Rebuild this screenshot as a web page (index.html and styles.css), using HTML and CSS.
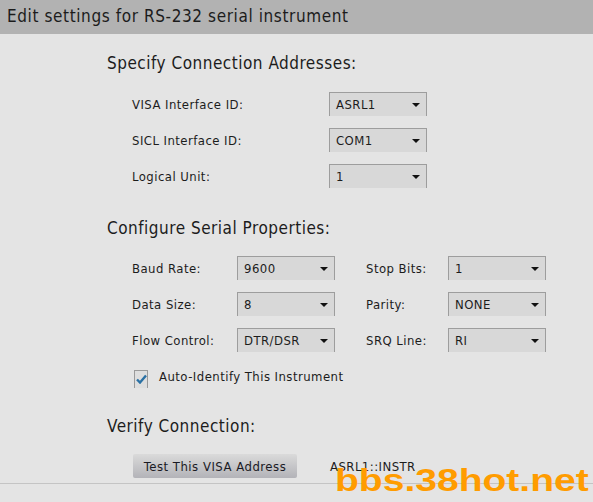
FILE: index.html
```html
<!DOCTYPE html>
<html lang="en">
<head>
  <meta charset="UTF-8">
  <title>Edit settings for RS-232 serial instrument</title>
  <link rel="stylesheet" href="styles.css">
</head>
<body>
  <div class="head">Edit settings for RS-232 serial instrument</div>

  <div class="content">
    <h2 class="section">Specify Connection Addresses:</h2>
    <div class="addr-grid">
      <label>VISA Interface ID:</label>
      <div class="select"><span>ASRL1</span><svg width="8" height="4" viewBox="0 0 8 4"><path d="M0 0h8L4 4z"/></svg></div>
      <label>SICL Interface ID:</label>
      <div class="select"><span>COM1</span><svg width="8" height="4" viewBox="0 0 8 4"><path d="M0 0h8L4 4z"/></svg></div>
      <label>Logical Unit:</label>
      <div class="select"><span>1</span><svg width="8" height="4" viewBox="0 0 8 4"><path d="M0 0h8L4 4z"/></svg></div>
    </div>

    <h2 class="section serial">Configure Serial Properties:</h2>
    <div class="serial-grid">
      <label>Baud Rate:</label>
      <div class="select"><span>9600</span><svg width="8" height="4" viewBox="0 0 8 4"><path d="M0 0h8L4 4z"/></svg></div>
      <label class="col2">Stop Bits:</label>
      <div class="select"><span>1</span><svg width="8" height="4" viewBox="0 0 8 4"><path d="M0 0h8L4 4z"/></svg></div>

      <label>Data Size:</label>
      <div class="select"><span>8</span><svg width="8" height="4" viewBox="0 0 8 4"><path d="M0 0h8L4 4z"/></svg></div>
      <label class="col2">Parity:</label>
      <div class="select"><span>NONE</span><svg width="8" height="4" viewBox="0 0 8 4"><path d="M0 0h8L4 4z"/></svg></div>

      <label>Flow Control:</label>
      <div class="select"><span>DTR/DSR</span><svg width="8" height="4" viewBox="0 0 8 4"><path d="M0 0h8L4 4z"/></svg></div>
      <label class="col2">SRQ Line:</label>
      <div class="select"><span>RI</span><svg width="8" height="4" viewBox="0 0 8 4"><path d="M0 0h8L4 4z"/></svg></div>
    </div>

    <div class="check-row">
      <span class="checkbox">
        <svg width="11" height="10" viewBox="0 0 11 10"><path d="M1 5.5l3 3L10 1.5" fill="none" stroke="#2b71a4" stroke-width="2.4"/></svg>
      </span>
      <span>Auto-Identify This Instrument</span>
    </div>

    <h2 class="section verify">Verify Connection:</h2>
    <div class="verify-row">
      <button class="test-btn">Test This VISA Address</button>
      <span class="address">ASRL1::INSTR</span>
    </div>
  </div>
  <div class="rule"></div>

  <div class="watermark">bbs.38hot.net</div>
</body>
</html>
```

FILE: styles.css
```css
body {
  margin: 0;
  background-color: #e4e4e4;
  font-family: "DejaVu Sans Condensed", "DejaVu Sans", sans-serif;
  color: #1c1c1c;
  position: relative;
  height: 502px;
  overflow: hidden;
}
.head {
  height: 34px;
  line-height: 32px;
  background-color: #b2b2b2;
  font-size: 17px;
  letter-spacing: 0.6px;
  padding-left: 7px;
}
.content {
  padding-left: 107px;
}
.section {
  font-size: 17px;
  font-weight: normal;
  letter-spacing: 0.5px;
  line-height: 20px;
  margin: 19px 0 19px 0;
}
.section.serial {
  margin: 30px 0 18px 0;
}
.section.verify {
  margin: 28px 0 18px 0;
}
label {
  font-size: 13px;
  letter-spacing: 0.45px;
}
.addr-grid {
  display: grid;
  grid-template-columns: 197px 98px;
  row-gap: 12px;
  align-items: center;
  padding-left: 25px;
}
.serial-grid {
  display: grid;
  grid-template-columns: 105px 98px 113px 98px;
  row-gap: 12px;
  align-items: center;
  padding-left: 25px;
}
.col2 {
  margin-left: 31px;
}
.select {
  box-sizing: border-box;
  height: 24px;
  display: flex;
  align-items: center;
  justify-content: space-between;
  padding: 0 6px 0 6px;
  background-color: #d8d8d8;
  border: 1px solid #9d9d9d;
  border-bottom: none;
  font-size: 13px;
  letter-spacing: 0.45px;
}
.select svg {
  fill: #111;
}
.check-row {
  display: flex;
  align-items: center;
  height: 24px;
  margin-top: 12px;
  padding-left: 27px;
  font-size: 13px;
  letter-spacing: 0.45px;
}
.checkbox {
  box-sizing: border-box;
  width: 14px;
  height: 18px;
  margin-top: 6px;
  margin-right: 11px;
  border: 1px solid #9a9a9a;
  border-bottom: none;
  background-color: #dedede;
  display: flex;
  justify-content: center;
  padding-top: 3px;
}
.checkbox svg {
  display: block;
}
.verify-row {
  display: flex;
  align-items: center;
  padding-left: 26px;
}
.test-btn {
  width: 164px;
  height: 24px;
  border: none;
  border-radius: 2px;
  background: linear-gradient(#dadada, #b3b3b8);
  font-family: inherit;
  font-size: 13px;
  letter-spacing: 0.5px;
  color: #1a1a24;
  padding: 0;
}
.address {
  margin-left: 33px;
  font-size: 13px;
  letter-spacing: 0.45px;
  margin-top: 1px;
}
.rule {
  height: 1px;
  margin-top: 5px;
  background-color: #c4c4c4;
}
.watermark {
  position: absolute;
  left: 335px;
  top: 462px;
  font-family: "Liberation Sans", Arial, sans-serif;
  font-weight: bold;
  font-size: 32px;
  color: #ff9c00;
  transform: scaleX(1.22);
  transform-origin: left top;
}
```
